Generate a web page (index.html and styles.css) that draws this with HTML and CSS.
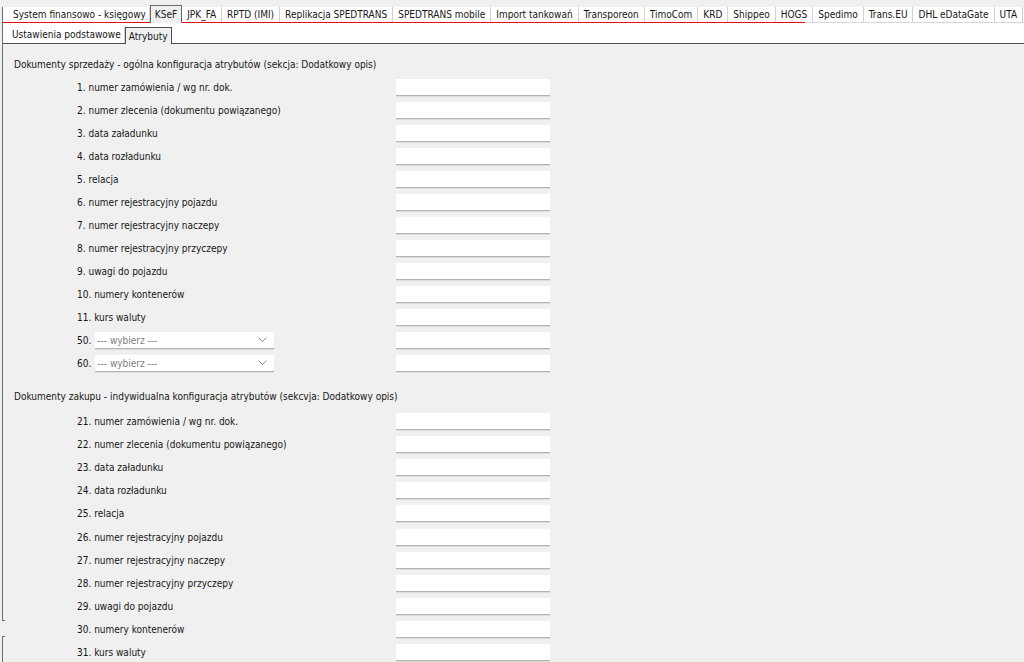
FILE: index.html
```html
<!DOCTYPE html>
<html lang="pl">
<head>
<meta charset="utf-8">
<title>KSeF - Atrybuty</title>
<link rel="stylesheet" href="styles.css">
</head>
<body>
<div class="app">
  <nav class="tabs main-tabs">
    <span class="tab">System finansowo - księgowy</span>
    <span class="tab active">KSeF</span>
    <span class="tab">JPK_FA</span>
    <span class="tab">RPTD (IMI)</span>
    <span class="tab">Replikacja SPEDTRANS</span>
    <span class="tab">SPEDTRANS mobile</span>
    <span class="tab">Import tankowań</span>
    <span class="tab">Transporeon</span>
    <span class="tab">TimoCom</span>
    <span class="tab">KRD</span>
    <span class="tab">Shippeo</span>
    <span class="tab">HOGS</span>
    <span class="tab">Spedimo</span>
    <span class="tab">Trans.EU</span>
    <span class="tab">DHL eDataGate</span>
    <span class="tab">UTA</span>
  </nav>
  <nav class="tabs sub-tabs">
    <span class="subtab">Ustawienia podstawowe</span>
    <span class="subtab active">Atrybuty</span>
  </nav>
  <main class="panel">
    <section class="group">
      <h2 class="group-title">Dokumenty sprzedaży - ogólna konfiguracja atrybutów (sekcja: Dodatkowy opis)</h2>
      <div class="row"><span class="label">1. numer zamówienia / wg nr. dok.</span><span class="field"></span></div>
      <div class="row"><span class="label">2. numer zlecenia (dokumentu powiązanego)</span><span class="field"></span></div>
      <div class="row"><span class="label">3. data załadunku</span><span class="field"></span></div>
      <div class="row"><span class="label">4. data rozładunku</span><span class="field"></span></div>
      <div class="row"><span class="label">5. relacja</span><span class="field"></span></div>
      <div class="row"><span class="label">6. numer rejestracyjny pojazdu</span><span class="field"></span></div>
      <div class="row"><span class="label">7. numer rejestracyjny naczepy</span><span class="field"></span></div>
      <div class="row"><span class="label">8. numer rejestracyjny przyczepy</span><span class="field"></span></div>
      <div class="row"><span class="label">9. uwagi do pojazdu</span><span class="field"></span></div>
      <div class="row"><span class="label">10. numery kontenerów</span><span class="field"></span></div>
      <div class="row"><span class="label">11. kurs waluty</span><span class="field"></span></div>
      <div class="row">
        <span class="label select-label">50.
          <span class="select"><span class="placeholder">--- wybierz ---</span>
            <svg class="chevron" width="9" height="6" viewBox="0 0 9 6"><polyline points="0.5,0.5 4.5,4.5 8.5,0.5" fill="none" stroke="#8a8a8a" stroke-width="1"/></svg>
          </span>
        </span>
        <span class="field"></span>
      </div>
      <div class="row">
        <span class="label select-label">60.
          <span class="select"><span class="placeholder">--- wybierz ---</span>
            <svg class="chevron" width="9" height="6" viewBox="0 0 9 6"><polyline points="0.5,0.5 4.5,4.5 8.5,0.5" fill="none" stroke="#8a8a8a" stroke-width="1"/></svg>
          </span>
        </span>
        <span class="field"></span>
      </div>
    </section>
    <section class="group">
      <h2 class="group-title">Dokumenty zakupu - indywidualna konfiguracja atrybutów (sekcvja: Dodatkowy opis)</h2>
      <div class="row"><span class="label">21. numer zamówienia / wg nr. dok.</span><span class="field"></span></div>
      <div class="row"><span class="label">22. numer zlecenia (dokumentu powiązanego)</span><span class="field"></span></div>
      <div class="row"><span class="label">23. data załadunku</span><span class="field"></span></div>
      <div class="row"><span class="label">24. data rozładunku</span><span class="field"></span></div>
      <div class="row"><span class="label">25. relacja</span><span class="field"></span></div>
      <div class="row"><span class="label">26. numer rejestracyjny pojazdu</span><span class="field"></span></div>
      <div class="row"><span class="label">27. numer rejestracyjny naczepy</span><span class="field"></span></div>
      <div class="row"><span class="label">28. numer rejestracyjny przyczepy</span><span class="field"></span></div>
      <div class="row"><span class="label">29. uwagi do pojazdu</span><span class="field"></span></div>
      <div class="row"><span class="label">30. numery kontenerów</span><span class="field"></span></div>
      <div class="row"><span class="label">31. kurs waluty</span><span class="field"></span></div>
    </section>
  </main>
</div>
</body>
</html>
```
FILE: styles.css
```css
html, body {
  margin: 0;
  padding: 0;
  background: #f0f0f0;
  overflow: hidden;
}
body {
  padding-top: 7px;
  font-family: "DejaVu Sans Condensed", "DejaVu Sans", sans-serif;
  font-size: 10px;
  color: #161616;
}
.app {
  position: relative;
  margin-left: 2px;
  border-left: 1px solid #6e6e6e;
  min-height: 660px;
}
.app::after {
  content: "";
  position: absolute;
  left: -1px;
  top: 613px;
  width: 3px;
  height: 15px;
  background: #f0f0f0;
  border-top: 1px solid #6e6e6e;
  border-bottom: 1px solid #6e6e6e;
}
.tabs {
  display: flex;
  align-items: flex-end;
  background: #fff;
}
.main-tabs {
  height: 15px;
  padding-left: 7px;
  border-image: linear-gradient(to right, #e01010 802px, #d6d6d6 802px) 0 0 1 0;
  border-style: solid;
  border-width: 0 0 1px 0;
}
.tab {
  box-sizing: border-box;
  height: 15px;
  line-height: 16px;
  padding: 0 5px;
  border-right: 1px solid #d2d2d2;
  white-space: nowrap;
}
.tab:first-child {
  padding: 0 3px;
}
.tab.active {
  height: 18px;
  line-height: 18px;
  margin-bottom: -1px;
  padding: 0 4px;
  background: #f0f0f0;
  border: 1px solid #6a6a6a;
  border-bottom: none;
  position: relative;
}
.sub-tabs {
  height: 19px;
  border-bottom: 1px solid #4e4e4e;
  padding-top: 1px;
}
.subtab {
  box-sizing: border-box;
  height: 17px;
  line-height: 18px;
  padding: 0 3px 0 9px;
  border-right: 1px solid #d2d2d2;
  white-space: nowrap;
}
.subtab.active {
  height: 17px;
  margin-bottom: -1px;
  padding: 0 3px;
  background: #f0f0f0;
  border: 1px solid #4e4e4e;
  border-bottom: none;
  line-height: 17px;
}
.panel {
  padding: 14px 0 0 0;
}
.group + .group {
  margin-top: 15px;
}
.group-title {
  margin: 0 0 4px 11px;
  font-size: 10px;
  font-weight: normal;
  line-height: 14px;
}
.group + .group .group-title {
  margin-bottom: 6px;
}
.row {
  display: grid;
  grid-template-columns: 319px 154px;
  align-items: center;
  height: 23px;
  padding-left: 74px;
}
.group + .group .row {
  height: 23.1px;
}
.label {
  white-space: nowrap;
}
.select-label {
  display: flex;
  align-items: center;
  gap: 4px;
}
.field,
.select {
  box-sizing: border-box;
  height: 17px;
  background: #fff;
  border-bottom: 1px solid #b4b4b4;
  box-shadow: 0 1px 0 #dcdcdc;
}
.select {
  width: 179px;
  display: flex;
  align-items: center;
  justify-content: space-between;
  padding: 0 7px 0 2px;
}
.placeholder {
  color: #808080;
}
.chevron {
  display: block;
}
```
